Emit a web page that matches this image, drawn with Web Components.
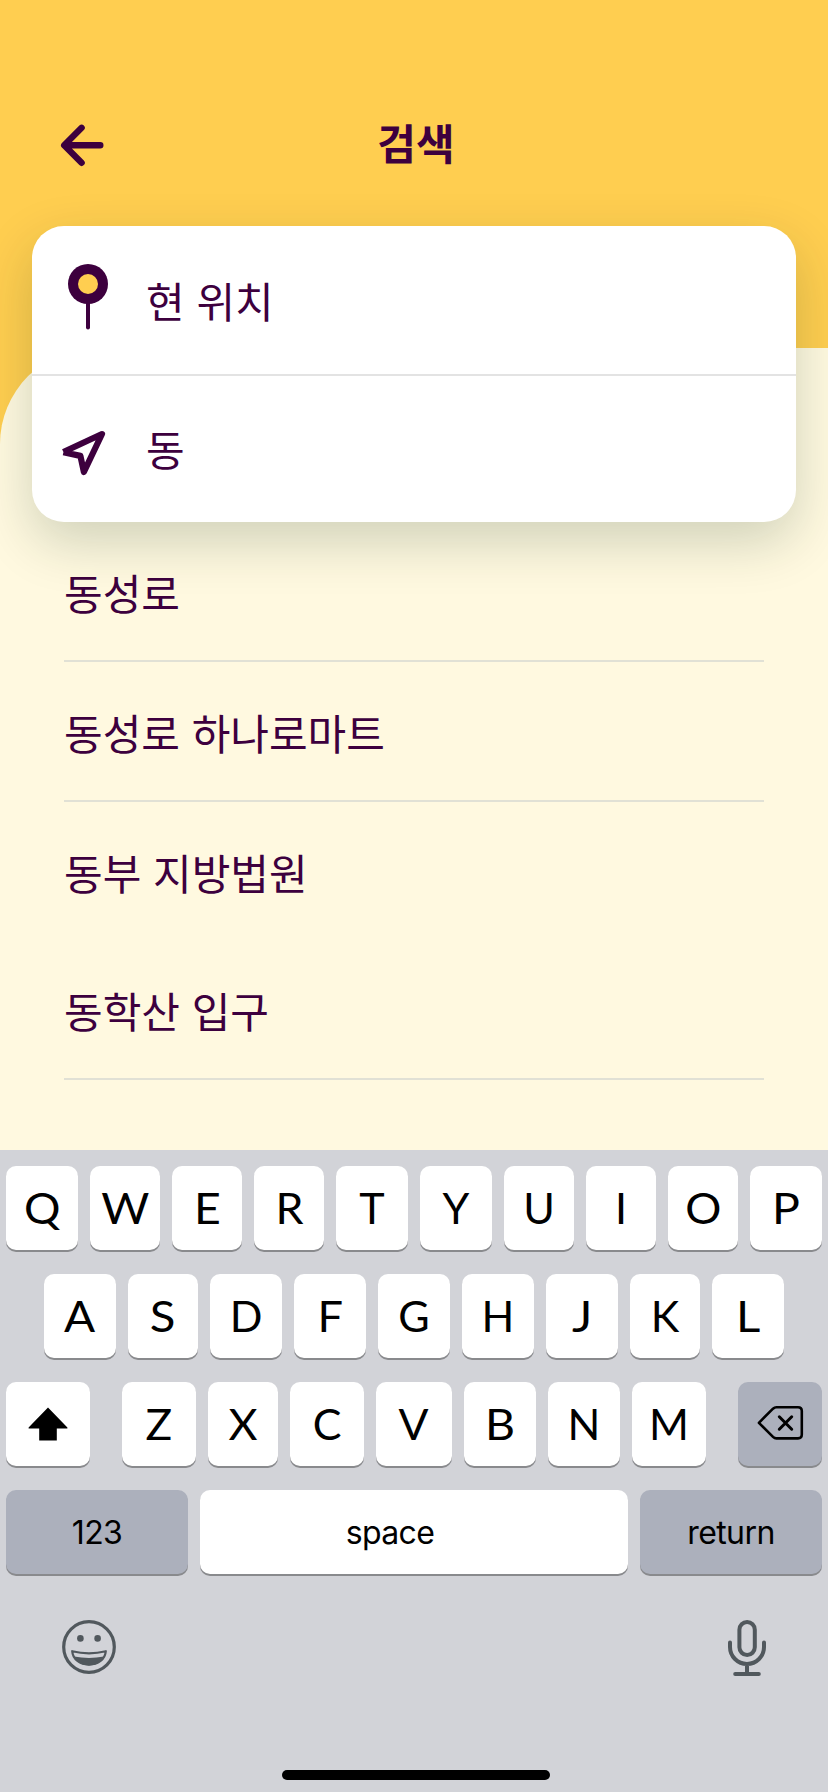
<!DOCTYPE html>
<html lang="ko">
<head>
<meta charset="utf-8">
<title>검색</title>
<style>
  html, body { margin: 0; padding: 0; }
  body { width: 828px; height: 1792px; overflow: hidden; font-family: "Noto Sans CJK KR", sans-serif; }
</style>
</head>
<body>
<search-screen>
  <app-header slot="header">검색</app-header>
  <search-card slot="card">
    <search-field icon="pin">현 위치</search-field>
    <search-field icon="arrow">동</search-field>
  </search-card>
  <result-item divider>동성로</result-item>
  <result-item divider>동성로 하나로마트</result-item>
  <result-item>동부 지방법원</result-item>
  <result-item divider>동학산 입구</result-item>
  <soft-keyboard slot="keyboard"></soft-keyboard>
</search-screen>

<script>
const define = (name, html, setup) => {
  const t = document.createElement('template');
  t.innerHTML = html;
  customElements.define(name, class extends HTMLElement {
    constructor() {
      super();
      this.attachShadow({ mode: 'open' }).append(t.content.cloneNode(true));
    }
    connectedCallback() { if (setup) setup(this, this.shadowRoot); }
  });
};

const INK = '#3d003e';

const ICONS = {
  back: `<svg width="44" height="44" viewBox="60 123 44 44" fill="none" stroke="${INK}" stroke-width="6.4" stroke-linecap="round" stroke-linejoin="round"><path d="M100.3 145.2H64.4M81.6 127.8 64.2 145.2 81.6 162.8"/></svg>`,
  pin: `<svg width="44" height="70" viewBox="66 262 44 70"><circle cx="88" cy="284" r="20" fill="${INK}"/><circle cx="88" cy="284" r="10" fill="#ffce50"/><path d="M88 300V327.5" stroke="${INK}" stroke-width="4" stroke-linecap="round"/></svg>`,
  arrow: `<svg width="48" height="48" viewBox="60 428 48 48" fill="none" stroke="${INK}" stroke-width="6.2" stroke-linecap="butt" stroke-linejoin="round"><path d="M63.4 452.2 80.4 455.9 83.9 472 102 434 63.4 452"/></svg>`,
  shift: `<svg width="40" height="36" viewBox="28 1406 40 36"><path d="M48 1407.6 67.4 1427.6V1428.4H56.8V1440.6H39.2V1428.4H28.6V1427.6Z"/></svg>`,
  del: `<svg width="48" height="36" viewBox="755 1405 48 36" fill="none" stroke="#000" stroke-width="2.6" stroke-linejoin="round"><path d="M757.9 1422.8 772 1408.7Q773.6 1407.2 775.4 1407.2H797Q800.8 1407.2 800.8 1411V1434.6Q800.8 1438.4 797 1438.4H775.4Q773.6 1438.4 772 1436.9Z"/><path d="M778.3 1416.8 790.7 1429.2M790.7 1416.8 778.3 1429.2" stroke-width="3" stroke-linecap="round"/></svg>`,
  emoji: `<svg width="56" height="56" viewBox="61 1619 56 56" fill="none" stroke="#51585d" stroke-width="3.2"><circle cx="89" cy="1647" r="25.3"/><g fill="#51585d" stroke="none"><circle cx="80.4" cy="1638.4" r="3.3"/><circle cx="97.6" cy="1638.4" r="3.3"/><path d="M74 1656.6Q89 1659.4 104 1656.6C101 1662.6 95 1665.6 89 1665.6S77 1662.6 74 1656.6Z"/></g><path d="M72.2 1651.2Q89 1655.4 105.8 1651.2C105.2 1659.4 98 1664.6 89 1664.6S72.8 1659.4 72.2 1651.2Z" stroke-width="2.2" stroke-linejoin="round"/></svg>`,
  mic: `<svg width="42" height="60" viewBox="726 1618 42 60" fill="none" stroke="#51585d" stroke-width="4" stroke-linecap="round"><rect x="739.4" y="1622" width="15.4" height="33" rx="7.7"/><path d="M730 1642.4V1647A17 17 0 0 0 764 1647V1642.4M747 1664V1674M735.2 1674H758.8"/></svg>`
};

define('ui-icon', `<style>:host{display:block;line-height:0;flex:none}svg{display:block}</style><div></div>`,
  (el, root) => { root.querySelector('div').innerHTML = ICONS[el.getAttribute('name')]; });

define('search-screen', `<style>
  :host { display: flex; flex-direction: column; width: 828px; height: 1792px; background: #ffce50; color: ${INK}; }
  .sheet { height: 802px; background: #fff9e0; border-top-left-radius: 96px; }
  .results { padding: 0 64px; }
</style>
<slot name="header"></slot>
<div class="sheet"><slot name="card"></slot><div class="results"><slot></slot></div></div>
<slot name="keyboard"></slot>`);

define('app-header', `<style>
  :host { display: grid; grid-template-columns: 44px 1fr 40px; align-items: center; box-sizing: border-box;
    height: 348px; padding: 94px 60px 152px; font-weight: 700; font-size: 42px; line-height: 60px; text-align: center; }
  span { padding-bottom: 7px; }
</style><ui-icon name="back"></ui-icon><span><slot></slot></span>`);

define('search-card', `<style>
  :host { display: flex; flex-direction: column; height: 296px; margin: -122px 32px 0;
    background: #fff; border-radius: 32px; box-shadow: 0 20px 54px rgba(0, 42, 20, .19); position: relative; }
</style><slot></slot>`);

define('search-field', `<style>
  :host { display: flex; align-items: center; box-sizing: border-box; height: 146px; font-size: 42px; line-height: 60px; }
  :host(:first-child) { height: 150px; border-bottom: 2px solid #e3e3e3; }
  .icon { width: 114px; display: flex; justify-content: flex-start; padding-left: 34px; box-sizing: border-box; }
  :host([icon="pin"]) .icon { padding-bottom: 6px; }
  :host([icon="arrow"]) .icon { padding: 6px 0 0 28px; }
  :host([icon="arrow"]) .text { padding-bottom: 3px; }
</style><span class="icon"></span><span class="text"><slot></slot></span>`,
  (el, root) => { root.querySelector('.icon').innerHTML = `<ui-icon name="${el.getAttribute('icon')}"></ui-icon>`; });

define('result-item', `<style>
  :host { display: flex; align-items: center; height: 138px; font-size: 42px; line-height: 60px; }
  :host([divider]) { border-bottom: 2px solid #e1e1d5; }
  span { padding-top: 2px; }
</style><span><slot></slot></span>`);

define('key-cap', `<style>
  :host { display: flex; align-items: center; justify-content: center; height: 84px; box-sizing: border-box; flex: none;
    background: #fff; border-radius: 10px; box-shadow: 0 2px 0 #898a8d; color: #000;
    font: 400 43px/84px Lato, sans-serif; }
  :host([muted]) { background: #acb0bc; }
  :host([word]) { font: 400 32px/84px Inter, sans-serif; letter-spacing: -.6px; padding-top: 2px; }
  span { display: block; transform: scaleX(var(--stretch, 1)); }
</style><span><slot></slot></span>`);

define('soft-keyboard', `<style>
  :host { display: flex; flex-direction: column; box-sizing: border-box; height: 642px; padding-top: 16px; background: #d2d3d8; }
  .row { display: grid; gap: 12px; height: 84px; margin: 0 6px 24px; }
  .r1 { grid-template-columns: 72px 70px 70px 70px 72px 72px 70px 70px 70px 72px; }
  .r2 { grid-template-columns: 72px 70px 72px 72px 72px 72px 72px 70px 72px; margin-left: 44px; }
  .r3 { display: flex; }
  .r4 { grid-template-columns: 182px 428px 182px; }
  .space { padding-right: 48px; }
  .shift { width: 84px; margin-right: 20px; }
  .delete { width: 84px; margin-left: 20px; padding-bottom: 2px; }
  .tools { display: flex; justify-content: space-between; align-items: center; padding: 0 60px 0 61px; height: 60px; margin-top: 20px; }
  .tools ui-icon:first-child { margin-top: -2px; }
  .home { width: 268px; height: 10px; border-radius: 5px; background: #000; margin: 92px 0 0 282px; }
</style>
<div class="row r1"></div><div class="row r2"></div><div class="row r3"></div>
<div class="row r4"><key-cap muted word>123</key-cap><key-cap word class="space">space</key-cap><key-cap muted word>return</key-cap></div>
<div class="tools"><ui-icon name="emoji"></ui-icon><ui-icon name="mic"></ui-icon></div>
<div class="home"></div>`,
  (el, root) => {
    const stretch = { Q: 1.06, E: 1.08, W: 1.08, O: 1.05, S: 1.1, J: 1.12, A: 1.07, Z: 1.03, X: 1.04, F: 1.05, P: 1.08, R: 1.04, L: 1.1, B: 1.08, V: 1.03 };
    const cap = (c, w) => `<key-cap style="--stretch:${stretch[c] || 1}${w ? `;width:${w}px` : ''}">${c}</key-cap>`;
    root.querySelector('.r1').innerHTML = [...'QWERTYUIOP'].map(c => cap(c)).join('');
    root.querySelector('.r2').innerHTML = [...'ASDFGHJKL'].map(c => cap(c)).join('');
    const widths = [74, 70, 74, 76, 72, 72, 74];
    root.querySelector('.r3').innerHTML =
      `<key-cap class="shift"><ui-icon name="shift"></ui-icon></key-cap>` +
      [...'ZXCVBNM'].map((c, i) => cap(c, widths[i])).join('') +
      `<key-cap muted class="delete"><ui-icon name="del"></ui-icon></key-cap>`;
  });
</script>
</body>
</html>
